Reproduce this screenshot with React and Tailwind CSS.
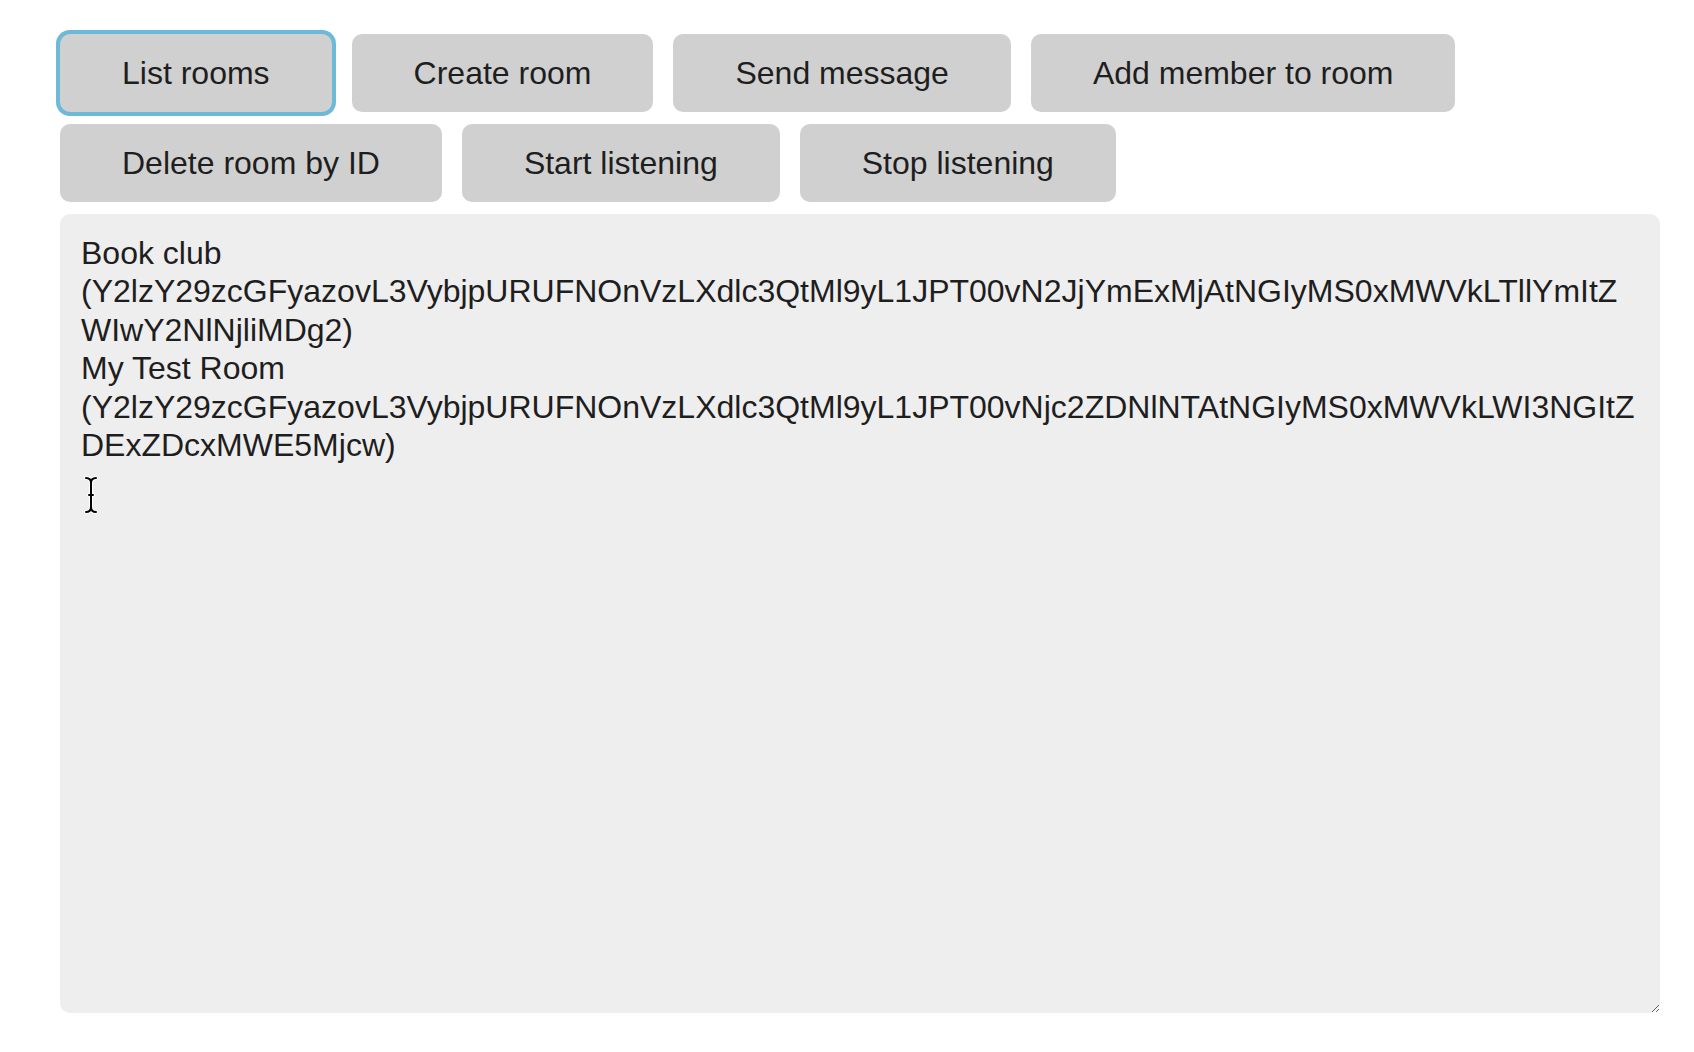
import { useState } from 'react';

const ACTIONS = [
    'List rooms',
    'Create room',
    'Send message',
    'Add member to room',
    'Delete room by ID',
    'Start listening',
    'Stop listening',
];

const OUTPUT = [
    'Book club',
    '(Y2lzY29zcGFyazovL3VybjpURUFNOnVzLXdlc3QtMl9yL1JPT00vN2JjYmExMjAtNGIyMS0xMWVkLTllYmItZ',
    'WIwY2NlNjliMDg2)',
    'My Test Room',
    '(Y2lzY29zcGFyazovL3VybjpURUFNOnVzLXdlc3QtMl9yL1JPT00vNjc2ZDNlNTAtNGIyMS0xMWVkLWI3NGItZ',
    'DExZDcxMWE5Mjcw)',
].join('\n');

// mouse pointer caught in the screenshot
function TextCursor() {
    return (
        <svg width="14" height="38" viewBox="0 0 14 38" className="absolute left-[84px] top-[476px] pointer-events-none">
            <g fill="none" strokeLinecap="round">
                <path d="M2 2 Q7 2 7 7 L7 31 Q7 36 2 36 M12 2 Q7 2 7 7 M7 31 Q7 36 12 36 M5 19 L9 19" stroke="#fff" strokeWidth="4" />
                <path d="M2 2 Q7 2 7 7 L7 31 Q7 36 2 36 M12 2 Q7 2 7 7 M7 31 Q7 36 12 36 M5 19 L9 19" stroke="#000" strokeWidth="2" />
            </g>
        </svg>
    );
}

export default function App() {
    const [active, setActive] = useState('List rooms');
    const [output, setOutput] = useState(OUTPUT);

    return (
        <div className="relative min-h-screen bg-white pl-[60px] pr-[35px] pt-[34px] text-[#222]" style={{ fontFamily: '"Liberation Sans", Arial, sans-serif' }}>
            <div className="flex flex-wrap gap-x-5 gap-y-3">
                {ACTIONS.map(label => (
                    <button
                        key={label}
                        onClick={() => setActive(label)}
                        className={`h-[78px] px-[62px] rounded-[10px] bg-[#d0d0d0] text-[32px] leading-[38px] text-[#1e1e1e] ${active === label ? 'ring-4 ring-[#6cb9d8]' : ''}`}
                    >
                        {label}
                    </button>
                ))}
            </div>

            <textarea
                value={output}
                onChange={e => setOutput(e.target.value)}
                wrap="off"
                className="mt-3 block w-[1600px] h-[799px] rounded-[10px] bg-[#eeeeee] pl-[21px] pr-4 pt-5 text-[32px] leading-[38.4px] text-[#1e1e1e] overflow-hidden outline-none"
            />

            <TextCursor />
        </div>
    );
}
